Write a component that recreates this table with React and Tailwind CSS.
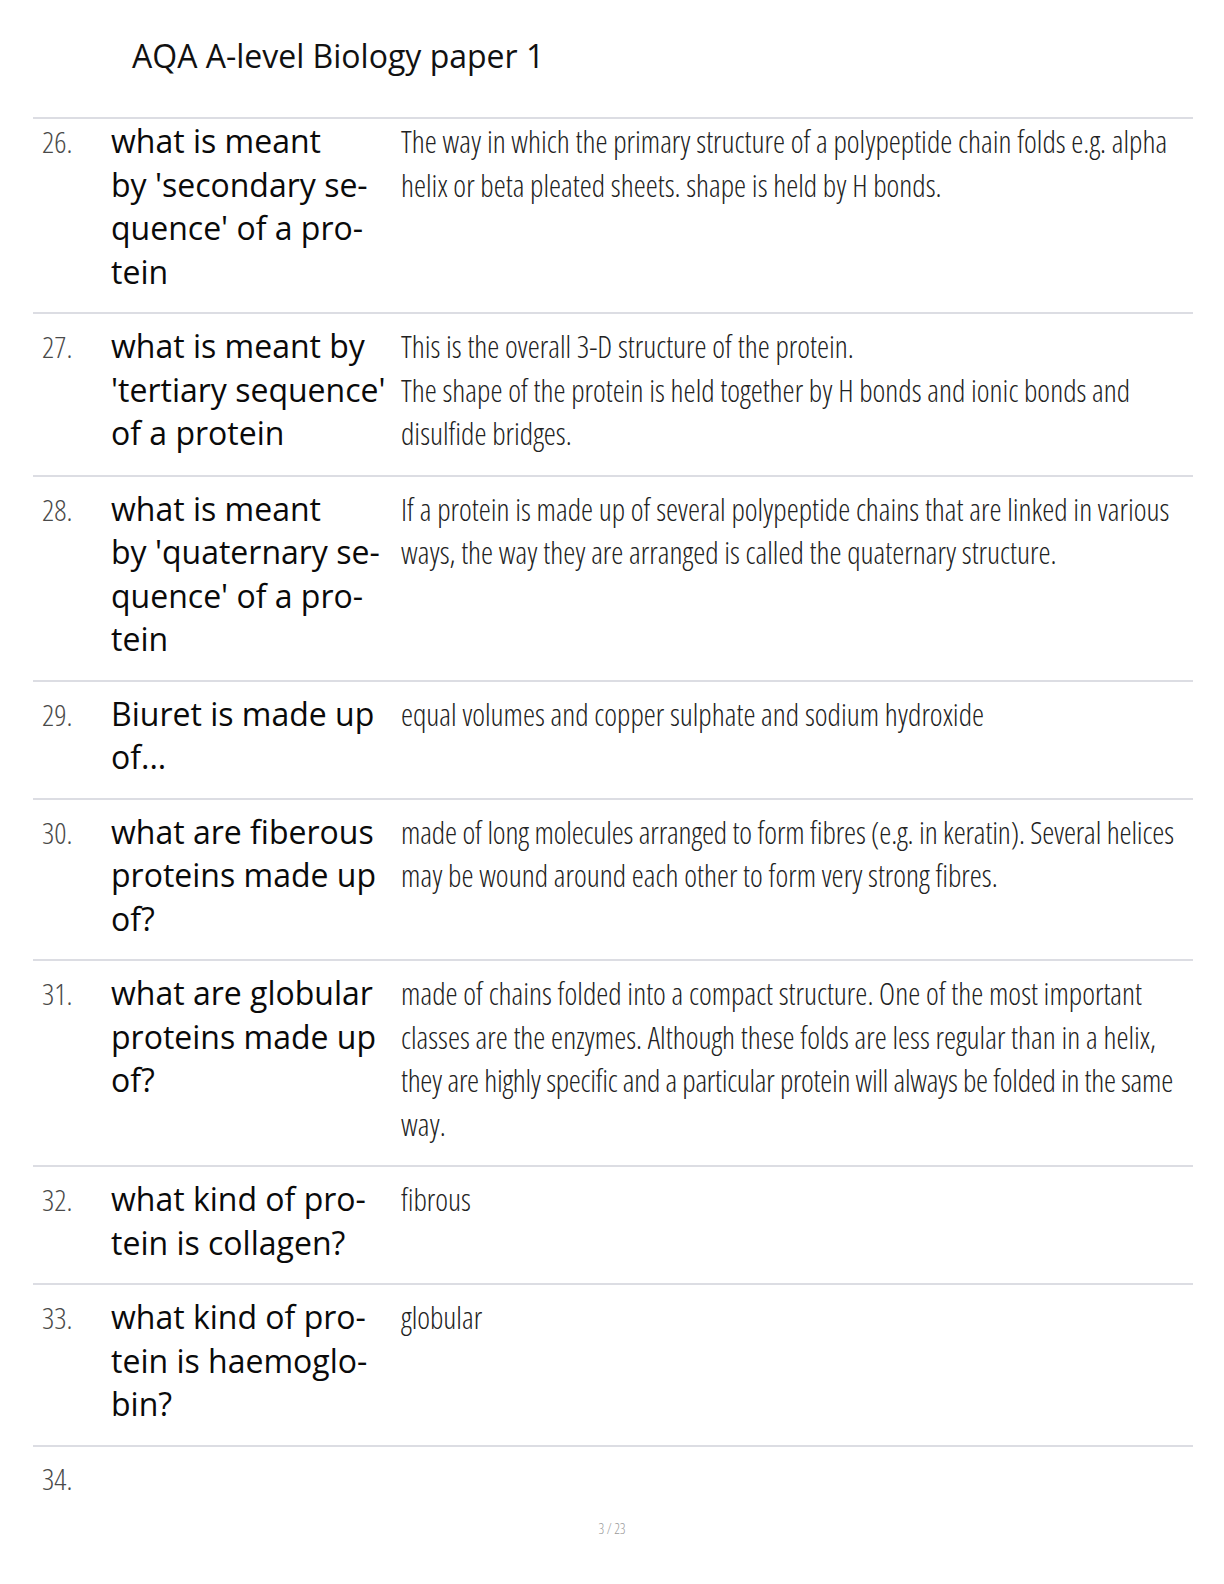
import React from "react";

const rows = [
  {
    n: "26.",
    q: ["what is meant", "by 'secondary se-", "quence' of a pro-", "tein"],
    a: [
      "The way in which the primary structure of a polypeptide chain folds e.g. alpha",
      "helix or beta pleated sheets. shape is held by H bonds.",
    ],
    first: true,
  },
  {
    n: "27.",
    q: ["what is meant by", "'tertiary sequence'", "of a protein"],
    a: [
      "This is the overall 3-D structure of the protein.",
      "The shape of the protein is held together by H bonds and ionic bonds and",
      "disulfide bridges.",
    ],
  },
  {
    n: "28.",
    q: ["what is meant", "by 'quaternary se-", "quence' of a pro-", "tein"],
    a: [
      "If a protein is made up of several polypeptide chains that are linked in various",
      "ways, the way they are arranged is called the quaternary structure.",
    ],
  },
  {
    n: "29.",
    q: ["Biuret is made up", "of..."],
    a: ["equal volumes and copper sulphate and sodium hydroxide"],
  },
  {
    n: "30.",
    q: ["what are fiberous", "proteins made up", "of?"],
    a: [
      {
        t: "made of long molecules arranged to form fibres (e.g. in keratin). Several helices",
        c: "tracking-[-0.15px]",
      },
      "may be wound around each other to form very strong fibres.",
    ],
  },
  {
    n: "31.",
    q: ["what are globular", "proteins made up", "of?"],
    a: [
      "made of chains folded into a compact structure. One of the most important",
      "classes are the enzymes. Although these folds are less regular than in a helix,",
      {
        t: "they are highly specific and a particular protein will always be folded in the same",
        c: "tracking-[-0.29px]",
      },
      "way.",
    ],
  },
  {
    n: "32.",
    q: ["what kind of pro-", "tein is collagen?"],
    a: ["fibrous"],
  },
  {
    n: "33.",
    q: ["what kind of pro-", "tein is haemoglo-", "bin?"],
    a: ["globular"],
  },
];

const cond = {
  fontFamily: "'Open Sans', 'Liberation Sans Narrow', sans-serif",
};

function Lines({ lines }) {
  return lines.map((l, i) => {
    const t = typeof l === "string" ? l : l.t;
    const c = typeof l === "string" ? "" : l.c;
    return (
      <span key={i} className={`block whitespace-nowrap ${c}`}>
        {t}
      </span>
    );
  });
}

export default function App() {
  return (
    <div className="w-[1224px] h-[1584px] bg-white overflow-hidden">
      <div className="pl-[132px] pt-[34px] pb-[39px]">
        <h1 className="text-[32px] leading-[44px] text-[#111] font-normal font-['Open_Sans',sans-serif]">
          AQA A-level Biology paper 1
        </h1>
      </div>
      <div className="mx-[33px] w-[1160px]">
        {rows.map((r) => (
          <div
            key={r.n}
            className={`flex items-baseline border-t-2 border-[#dcdde3] pb-[19px] ${
              r.first ? "pt-0" : "pt-[10px]"
            }`}
          >
            <div
              className="w-[78px] pl-[9px] shrink-0 text-[30px] leading-[43.5px] font-light text-[#4a4a4a] [font-stretch:75%]"
              style={cond}
            >
              {r.n}
            </div>
            <div className="w-[290px] shrink-0 text-[32px] leading-[43.5px] font-medium text-[#0a0a0a] font-['Open_Sans',sans-serif]">
              <Lines lines={r.q} />
            </div>
            <div
              className="flex-1 pr-[20px] text-[30.5px] leading-[43.5px] font-light text-[#222] [font-stretch:75%]"
              style={cond}
            >
              <Lines lines={r.a} />
            </div>
          </div>
        ))}
        <div className="flex items-baseline border-t-2 border-[#dcdde3] pt-[10px]">
          <div
            className="w-[78px] pl-[9px] shrink-0 text-[30px] leading-[43.5px] font-light text-[#4a4a4a] [font-stretch:75%]"
            style={cond}
          >
            34.
          </div>
        </div>
      </div>
      <div
        className="mt-[19px] text-center text-[14px] leading-[20px] font-light text-[#999] [font-stretch:75%]"
        style={cond}
      >
        3 / 23
      </div>
    </div>
  );
}
